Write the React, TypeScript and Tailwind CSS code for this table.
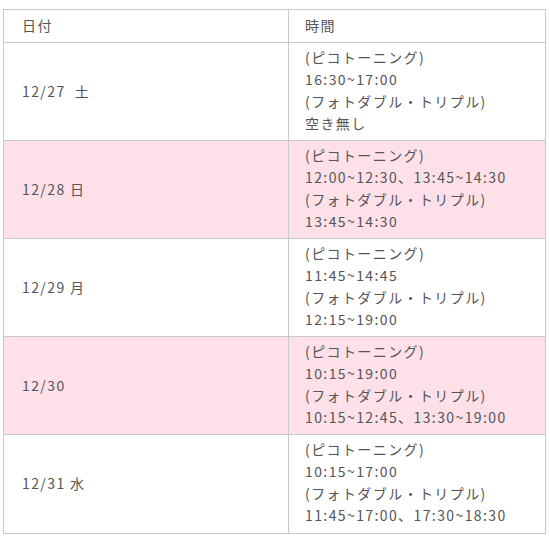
const ROWS = [
  { date: '12/27  土', pink: false, lines: ['(ピコトーニング)', '16:30~17:00', '(フォトダブル・トリプル)', '空き無し'] },
  { date: '12/28 日', pink: true, lines: ['(ピコトーニング)', '12:00~12:30、13:45~14:30', '(フォトダブル・トリプル)', '13:45~14:30'] },
  { date: '12/29 月', pink: false, lines: ['(ピコトーニング)', '11:45~14:45', '(フォトダブル・トリプル)', '12:15~19:00'] },
  { date: '12/30', pink: true, lines: ['(ピコトーニング)', '10:15~19:00', '(フォトダブル・トリプル)', '10:15~12:45、13:30~19:00'] },
  { date: '12/31 水', pink: false, lines: ['(ピコトーニング)', '10:15~17:00', '(フォトダブル・トリプル)', '11:45~17:00、17:30~18:30'] },
]

export default function App() {
  return (
    <div className="w-[550px] h-[560px] bg-white pt-[9px] pl-[3px] font-['Noto_Sans_CJK_JP',sans-serif] text-[14px] tracking-[0.1em] text-[#555]">
      <div className="w-[543px] border border-[#c8c8c8]">
        <div className="grid grid-cols-[285px_1fr] h-[33px] border-b border-[#c8c8c8]">
          <div className="flex items-center pl-[18px] pb-[1px] border-r border-[#c8c8c8]">日付</div>
          <div className="flex items-center pl-[16px] pb-[1px]">時間</div>
        </div>
        {ROWS.map((row, i) => (
          <div
            key={row.date}
            className={`grid grid-cols-[285px_1fr] h-[98px] ${i < ROWS.length - 1 ? 'border-b border-[#c8c8c8]' : ''} ${row.pink ? 'bg-[#fde0e8]' : 'bg-white'}`}
          >
            <div className="flex items-center pl-[18px] pb-[1px] border-r border-[#c8c8c8] whitespace-pre">{row.date}</div>
            <div className="flex flex-col justify-center pl-[16px] pb-[4px] leading-[22px]">
              {row.lines.map(l => (
                <div key={l}>{l}</div>
              ))}
            </div>
          </div>
        ))}
      </div>
    </div>
  )
}
